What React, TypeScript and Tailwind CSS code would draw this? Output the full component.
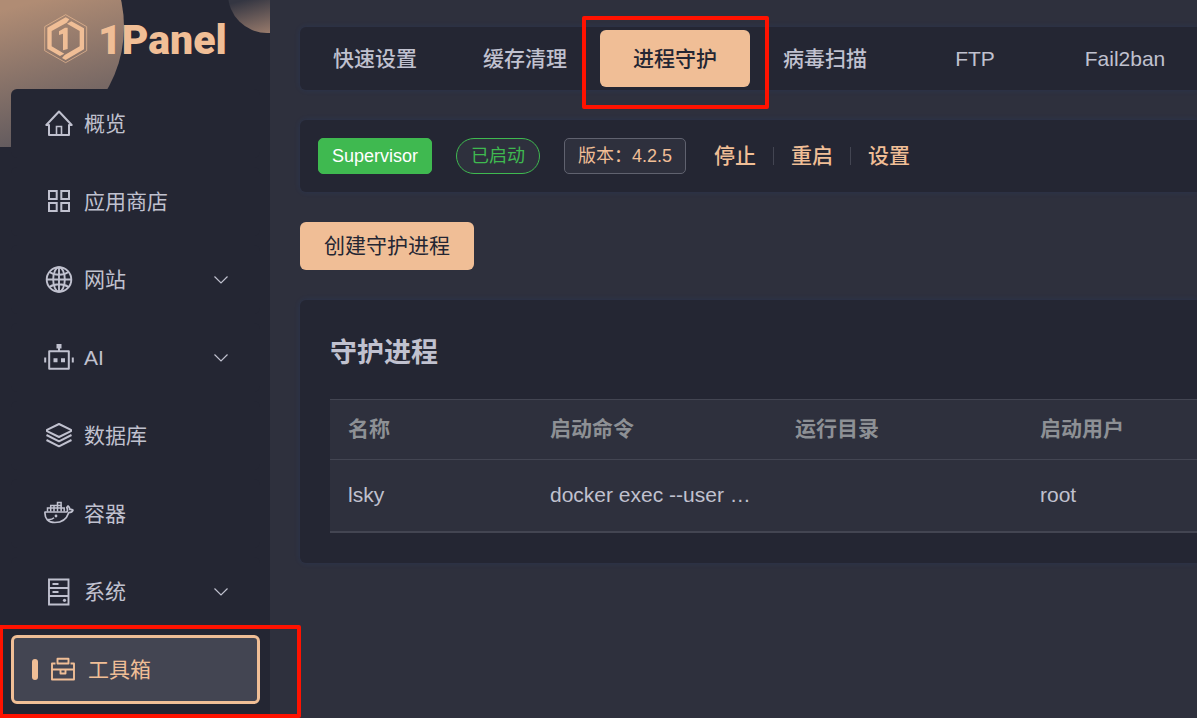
import clsx from "clsx";
import { ReactNode } from "react";

type IconProps = { children: ReactNode };
const Icon = ({ children }: IconProps) => (
  <svg
    viewBox="0 1 30 30"
    className="h-[30px] w-[30px] shrink-0"
    fill="none"
    stroke="currentColor"
    strokeWidth="2"
    aria-hidden="true"
  >
    {children}
  </svg>
);

const HomeIcon = () => (
  <Icon>
    <path d="M5 17H2.300L15 3.500 27.700 17H25v10H5z" strokeLinejoin="round" />
    <path d="M12.500 27v-8.500h5V27" strokeWidth="1.600" />
  </Icon>
);

const AppStoreIcon = () => (
  <Icon>
    <path d="M5 5h7.700v8H5zM17.300 5H25v8h-7.700zM5 17h7.700v8H5zM17.300 17H25v8h-7.700z" />
  </Icon>
);

const GlobeIcon = () => (
  <Icon>
    <g strokeWidth="1.900">
      <circle cx="15" cy="15.500" r="12.300" />
      <ellipse cx="15" cy="15.500" rx="5.800" ry="12.300" />
      <path d="M15 3.200v24.600M2.700 15.500h24.600M5.500 8c5 3.600 14 3.600 19 0M5.500 23c5-3.600 14-3.600 19 0" />
    </g>
  </Icon>
);

const RobotIcon = () => (
  <Icon>
    <path d="M5.200 9.200h19.600v17.600H5.200z" strokeLinejoin="round" />
    <path d="M15 6v3M1.200 15.500v5M28.800 15.500v5" />
    <path d="M12.500 2h5v4.500h-5zM9.500 16.200h4v4h-4zM17 16.200h4v4h-4z" fill="currentColor" stroke="none" />
  </Icon>
);

const LayersIcon = () => (
  <Icon>
    <g strokeLinejoin="round">
      <path d="M15 4l12 5.800v1.400L15 17 3 11.200V9.800z" />
      <path d="M2.500 15L15 21.300 27.500 15M2.500 20L15 26.300 27.500 20" />
    </g>
  </Icon>
);

const DockerIcon = () => (
  <Icon>
    <path
      d="M1 14h21c2.200 0 1.500-3.300.800-4.500l1.200-1.500c1.500 1 1.800 2.300 1.800 3.500 1.200-.300 2.300-.100 3.200.600-.600 1.900-2.400 2.600-4.300 2.600C22.500 21.300 17.500 24.500 10.800 24.500 4.500 24.500.500 21 1 14z"
      strokeWidth="1.700"
      strokeLinejoin="round"
    />
    <path d="M3.500 13.500V10h13.700v3.500M6.700 13.500V7.500h10.500v6M10 13.500v-6M13.500 13.500v-9h3.600v9M17.200 10h3v3.500M4 21.500c2 .300 4.500-.300 6-1.700" strokeWidth="1.500" />
    <circle cx="12" cy="18" r="1.400" fill="currentColor" stroke="none" />
  </Icon>
);

const SystemIcon = () => (
  <Icon>
    <path d="M5 3.500h19.500v25H5zM5 12h19.500M5 20h19.500" strokeWidth="1.900" />
    <path d="M8.500 8h6M8.500 16h6" strokeWidth="1.900" />
    <circle cx="20.500" cy="24.300" r="1.600" fill="currentColor" stroke="none" />
  </Icon>
);

const ToolboxIcon = () => (
  <Icon>
    <g strokeWidth="1.900" strokeLinejoin="round">
      <path d="M7.500 9.500H4v16h22v-16h-3.500M4 15.500h22" />
      <path d="M9.500 9.500V4.800h11v4.700z" />
      <path d="M12.500 15.500v4h5v-4" />
    </g>
  </Icon>
);

const ChevronIcon = () => (
  <svg
    viewBox="0 0 14 8"
    className="ml-auto h-2 w-3.5"
    fill="none"
    stroke="currentColor"
    strokeWidth="1.200"
    aria-hidden="true"
  >
    <path d="M.500.500L7 7 13.500.500" />
  </svg>
);

const menuItems = [
  { label: "概览", icon: <HomeIcon /> },
  { label: "应用商店", icon: <AppStoreIcon /> },
  { label: "网站", icon: <GlobeIcon />, expandable: true },
  { label: "AI", icon: <RobotIcon />, expandable: true },
  { label: "数据库", icon: <LayersIcon /> },
  { label: "容器", icon: <DockerIcon /> },
  { label: "系统", icon: <SystemIcon />, expandable: true },
  { label: "工具箱", icon: <ToolboxIcon />, active: true },
];

const tabs = ["快速设置", "缓存清理", "进程守护", "病毒扫描", "FTP", "Fail2ban"];

const processes = [
  { name: "lsky", command: "docker exec --user …", dir: "", user: "root" },
];

const Logo = () => (
  <a href="#" className="relative flex items-start gap-2.5 text-[#f0be96]">
    <svg viewBox="27 17 132 150" className="h-[50px] w-11" fill="none" aria-hidden="true">
      <path d="M92 19l63 36v72l-63 36-63-36V55z" stroke="currentColor" strokeWidth="2" />
      <path d="M92 27l11 6-8 10-45 25v46l38 22-13 7-38-22V58z" fill="currentColor" />
      <path d="M92 155l-11-6 8-9 45-26V68L96 46l13-7 38 21v63z" fill="currentColor" />
      <path d="M72 69l18-11h8v64l-14 4V76l-12 4z" fill="currentColor" />
    </svg>
    <span className="font-[Roboto,sans-serif] text-[41px] leading-[52px] font-black">
      1Panel
    </span>
  </a>
);

const Sidebar = () => (
  <aside className="relative w-[270px] shrink-0 bg-[#242633]">
    <div className="absolute inset-x-0 top-0 h-[147px] overflow-hidden" aria-hidden="true">
      <div className="absolute -top-[98px] -left-[126px] h-[250px] w-[250px] rounded-full bg-linear-[165deg,#b08c74_45%,#504f59_100%]" />
      <div className="absolute -top-[45px] left-[228px] h-[78px] w-[78px] rounded-full bg-linear-[165deg,#343642_50%,#b08b76_100%]" />
    </div>
    <div className="flex h-[89px] items-start pt-3.5 pl-11">
      <Logo />
    </div>
    <nav className="relative flex flex-col gap-[9px] pr-2.5 pb-3 pl-[11px]">
      {menuItems.map(({ label, icon, expandable, active }) => (
        <a
          key={label}
          href="#"
          className={clsx(
            "flex h-[69px] items-center gap-2.5 rounded-md pr-8",
            active
              ? "border-[3px] border-[#f0be96] bg-[#434552] pl-[18px] text-[#f0be96]"
              : "bg-[#242633] pl-[33px] text-[#c0c1cf]"
          )}
        >
          {active && <span className="h-[21px] w-1.5 rounded-full bg-[#f0be96]" />}
          {icon}
          <span>{label}</span>
          {expandable && <ChevronIcon />}
        </a>
      ))}
    </nav>
    {/* highlight around the selected entry */}
    <div className="pointer-events-none absolute top-[625px] left-0 -right-[31px] h-[93px] rounded-r-xs border-4 border-l-[3px] border-[#ff1200]" />
  </aside>
);

const TabBar = () => (
  <nav className="flex rounded-l-md bg-[#242633] py-[3px] font-medium shadow-[0_0_6px_rgba(0,94,235,0.1)]">
    {tabs.map((tab) => {
      const active = tab === "进程守护";
      return (
        <div key={tab} className="relative w-[150px] shrink-0">
          <button
            className={clsx(
              "h-[57px] w-full rounded-md",
              active ? "bg-[#f0be96] text-[#242633]" : "text-[#c0c1cf]"
            )}
          >
            {tab}
          </button>
          {active && (
            <div className="pointer-events-none absolute -top-3.5 -right-[19px] -bottom-[22px] -left-[18px] z-10 rounded-xs border-4 border-[#ff1200]" />
          )}
        </div>
      );
    })}
  </nav>
);

const StatusBar = () => (
  <section className="flex h-[72px] items-center rounded-l-md bg-[#242633] px-[18px] shadow-[0_0_6px_rgba(0,94,235,0.1)]">
    <div className="flex gap-6 text-lg leading-[34px]">
      <span className="rounded-[5px] border border-[#3fb950] bg-[#3fb950] px-[13px] text-white">
        Supervisor
      </span>
      <span className="rounded-full border border-[#3fb950] bg-[#2e303d] px-3.5 text-[#3fb950]">
        已启动
      </span>
      <span className="rounded-[5px] border border-[#60626f] bg-[#2e303d] px-[13px] text-[#f0be96]">
        版本：4.2.5
      </span>
    </div>
    <div className="ml-7 flex items-center font-medium text-[#f0be96]">
      <button>停止</button>
      <span className="mx-[17px] h-[18px] w-px bg-[#434552]" />
      <button>重启</button>
      <span className="mx-[17px] h-[18px] w-px bg-[#434552]" />
      <button>设置</button>
    </div>
  </section>
);

const ProcessTable = () => (
  <section className="rounded-l-md bg-[#242633] pt-8 pb-[30px] pl-[30px] shadow-[0_0_6px_rgba(0,94,235,0.1)]">
    <h1 className="mb-[25px] text-[27px] leading-[42px] font-bold">守护进程</h1>
    <table className="w-full table-fixed border-collapse bg-[#2e303d] text-left">
      <colgroup>
        <col className="w-[202px]" />
        <col className="w-[245px]" />
        <col className="w-[245px]" />
        <col />
      </colgroup>
      <thead>
        <tr className="h-[60px] border-y border-[#434552] text-[#8d9095]">
          <th className="px-[18px] pb-0.5 font-bold">名称</th>
          <th className="px-[18px] pb-0.5 font-bold">启动命令</th>
          <th className="px-[18px] pb-0.5 font-bold">运行目录</th>
          <th className="px-[18px] pb-0.5 font-bold">启动用户</th>
        </tr>
      </thead>
      <tbody>
        {processes.map(({ name, command, dir, user }) => (
          <tr key={name} className="h-[72px] border-b-2 border-[#434552]">
            <td className="px-[18px]">{name}</td>
            <td className="truncate px-[18px]">{command}</td>
            <td className="px-[18px]">{dir}</td>
            <td className="px-[18px]">{user}</td>
          </tr>
        ))}
      </tbody>
    </table>
  </section>
);

export default function App() {
  return (
    <div className="flex min-h-screen overflow-hidden bg-[#2e303d] font-['Liberation_Sans','Noto_Sans_CJK_SC',sans-serif] text-[21px] leading-8 text-[#c0c1cf]">
      <Sidebar />
      <main className="flex min-w-0 flex-1 flex-col gap-[30px] pt-[27px] pl-[30px]">
        <TabBar />
        <StatusBar />
        <button className="h-12 self-start rounded-md bg-[#f0be96] px-6 text-[#242633]">
          创建守护进程
        </button>
        <ProcessTable />
      </main>
    </div>
  );
}
